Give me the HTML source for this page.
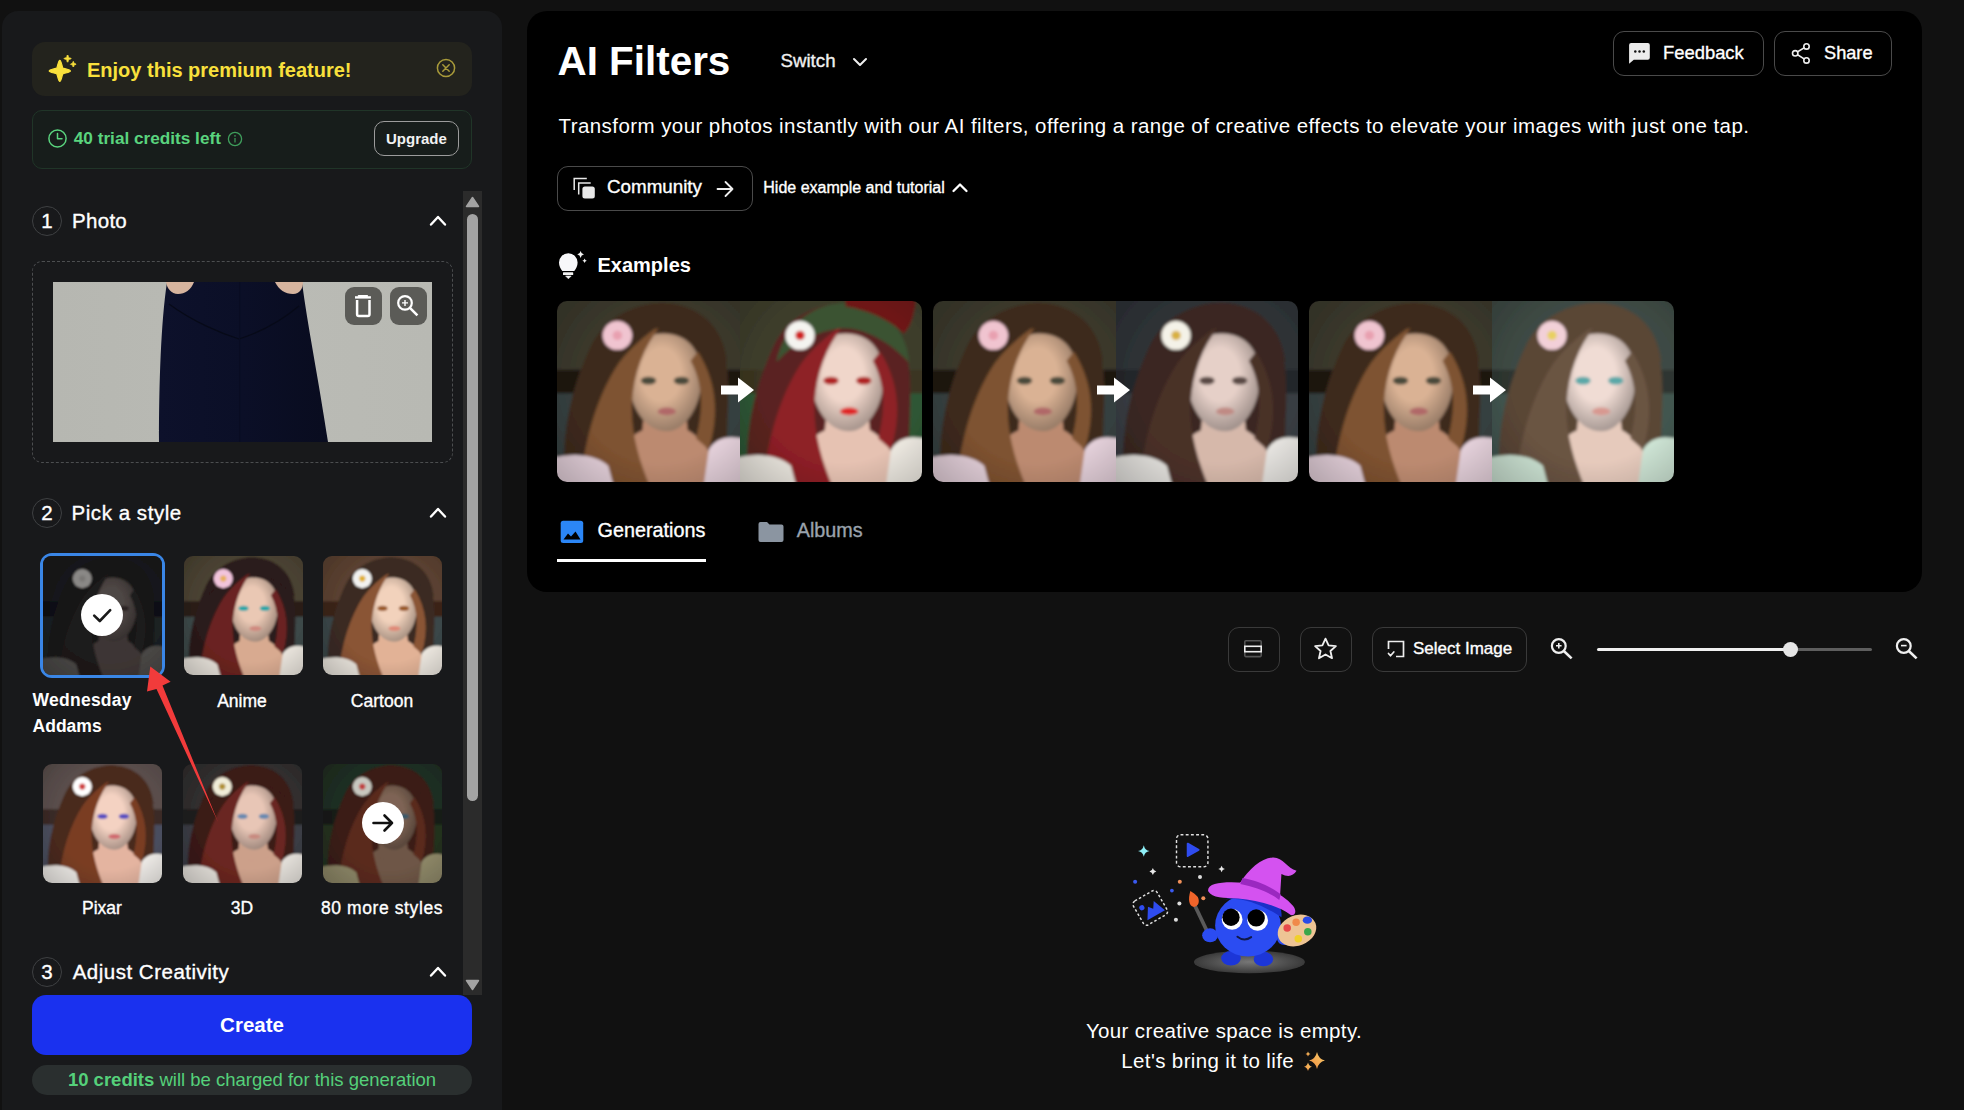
<!DOCTYPE html>
<html><head><meta charset="utf-8">
<style>
*{box-sizing:border-box;margin:0;padding:0}
html,body{width:1964px;height:1110px;overflow:hidden;background:#111111;font-family:"Liberation Sans",sans-serif;color:#fff}
.a{position:absolute}
.t{position:absolute;white-space:nowrap;line-height:1}
svg{display:block}
#left{left:2px;top:11px;width:500px;height:1110px;background:#18191b;border-radius:16px 16px 0 0}
.m{-webkit-text-stroke:0.35px currentColor}
#card{left:527px;top:11px;width:1395px;height:581px;background:#000;border-radius:20px}
.btn{position:absolute;border:1.5px solid #4a4a4a;border-radius:11px}
.circ{position:absolute;width:30px;height:30px;border:1.5px solid #3e4042;border-radius:50%}
.thumb{position:absolute;width:119px;height:119px;border-radius:9px;overflow:hidden}
.thumb svg{width:100%;height:100%}
.pb,.px,.pd,.pp,.pw,.pa,.pc,.px2,.p3,.pm{--top:var(--hair);--hat:transparent}
.pb{--bg1:#3a382c;--band:#1e1610;--bg2:#364040;--hair:#3e2a1c;--hair2:#7e5230;--skin:#dab294;--skin2:#bc8a70;--shirt:#e6d2dc;--fl:#f0c4d0;--flc:#e8a0b0;--eye:#4a4a3a;--lip:#b06868}
.px{--bg1:#3e3e2c;--band:#3a3420;--bg2:#2e5634;--hair:#5a2420;--hair2:#8e2026;--skin:#f0d6ca;--skin2:#e6c2b2;--shirt:#eeeae2;--fl:#f4f4f0;--flc:#d02020;--eye:#b02020;--lip:#e02828;--top:#3a5232;--hat:#6e1616}
.pd{--bg1:#2e3236;--band:#22262a;--bg2:#383c42;--hair:#3a2822;--hair2:#4a3028;--skin:#e6d0c8;--skin2:#d6b8aa;--shirt:#e8e6e2;--fl:#f4f2e8;--flc:#d8b040;--eye:#5a4a44;--lip:#c08a84}
.pp{--bg1:#3e4a44;--band:#2e3630;--bg2:#425650;--hair:#5a4636;--hair2:#6a5442;--skin:#f0dcd4;--skin2:#e6cabc;--shirt:#cfe6d6;--fl:#f2d0d8;--flc:#e8d060;--eye:#5aa8a8;--lip:#d89890}
.pw{--bg1:#16181a;--band:#101112;--bg2:#1a2022;--hair:#171414;--hair2:#1e1a1a;--skin:#4e4644;--skin2:#3e3634;--shirt:#4a4846;--fl:#8a8886;--flc:#7a7876;--eye:#2a2422;--lip:#4a3a3a}
.pa{--bg1:#4a4232;--band:#2a1e18;--bg2:#3c4848;--hair:#2a1a1a;--hair2:#6a2220;--skin:#eac8b4;--skin2:#d8aa90;--shirt:#ebe6de;--fl:#f2c4dc;--flc:#e8b060;--eye:#2aa6a8;--lip:#d08a80}
.pc{--bg1:#5a4030;--band:#3a2418;--bg2:#3a4648;--hair:#3a2a24;--hair2:#8a5434;--skin:#f2d2bc;--skin2:#e2b296;--shirt:#ede8e0;--fl:#f2f2f0;--flc:#e0b030;--eye:#9a5a2a;--lip:#e08a78}
.px2{--bg1:#5a4e4c;--band:#3a2a26;--bg2:#4a4e5e;--hair:#4a2a1e;--hair2:#7a3e24;--skin:#f4d2c2;--skin2:#e4b4a0;--shirt:#efece8;--fl:#ffffff;--flc:#d04040;--eye:#5a50c0;--lip:#d06a70}
.p3{--bg1:#302e2e;--band:#1e1c1c;--bg2:#3a3c44;--hair:#3a1a18;--hair2:#6a2620;--skin:#e8c6b6;--skin2:#cca08a;--shirt:#e6e2dc;--fl:#f0ecd8;--flc:#b09030;--eye:#6a8ab0;--lip:#c88a80}
.pm{--bg1:#1e2e22;--band:#141a14;--bg2:#24301e;--hair:#3a1c16;--hair2:#5a2a1e;--skin:#7e6454;--skin2:#6e5646;--shirt:#8e8868;--fl:#c8c8c0;--flc:#c04040;--eye:#3a5a6a;--lip:#8a5a50}

</style></head>
<body>
<svg width="0" height="0" style="position:absolute">
<defs>
<filter id="bl" x="-20%" y="-20%" width="140%" height="140%"><feGaussianBlur stdDeviation="0.9"/></filter>
<radialGradient id="fsh" cx="0.45" cy="0.42" r="0.6"><stop offset="0.45" stop-color="#000" stop-opacity="0"/><stop offset="1" stop-color="#000" stop-opacity="0.32"/></radialGradient>
<radialGradient id="vig" cx="0.55" cy="0.45" r="0.75"><stop offset="0.5" stop-color="#000" stop-opacity="0"/><stop offset="1" stop-color="#000" stop-opacity="0.3"/></radialGradient>
<symbol id="por" viewBox="0 0 100 100" preserveAspectRatio="none">
<g filter="url(#bl)">
<rect x="-10" y="-10" width="120" height="120" fill="var(--bg1)"/>
<rect x="-10" y="38" width="120" height="14" fill="var(--band)"/>
<rect x="-10" y="51" width="120" height="60" fill="var(--bg2)"/>
<path d="M6,110 C0,78 8,48 18,26 C26,8 44,1 58,1 C77,2 91,16 93,38 C95,58 91,78 94,110Z" fill="var(--hair)"/>
<path d="M20,110 C26,84 40,70 60,68 C78,70 88,84 90,110Z" fill="var(--skin2)"/>
<path d="M48,58 L70,58 L72,78 C64,82 54,82 46,78Z" fill="var(--skin2)"/>
<path d="M39,41 C39,25 48,18 58,18 C70,18 79,26 79,42 C79,58 70,72 60,72 C48,72 39,58 39,41Z" fill="var(--skin)"/>
<path d="M39,41 C39,25 48,18 58,18 C70,18 79,26 79,42 C79,58 70,72 60,72 C48,72 39,58 39,41Z" fill="url(#fsh)"/>
<path d="M12,110 C14,78 22,52 34,34 C40,26 48,19 57,13 C47,26 42,40 41,56 C40,74 46,92 54,110Z" fill="var(--hair2)"/>
<path d="M77,28 C87,44 89,62 83,82 L76,76 C80,60 80,46 73,33Z" fill="var(--hair2)"/>
<path d="M20,34 C24,12 42,1 58,1 C78,2 91,14 93,34 C82,22 68,15 57,15 C42,16 28,24 20,34Z" fill="var(--top)"/>
<path d="M58,-10 H97 C97,6 94,14 90,18 C82,10 70,5 58,3Z" fill="var(--hat)"/>
<path d="M-10,110 V89 C6,83 20,84 28,91 L33,110Z" fill="var(--shirt)"/>
<path d="M110,110 V80 C98,73 88,74 83,82 L79,110Z" fill="var(--shirt)"/>
<circle cx="33" cy="19" r="8" fill="var(--fl)"/>
<circle cx="33" cy="19" r="2.6" fill="var(--flc)"/>
<ellipse cx="50" cy="44" rx="4.2" ry="2.2" fill="var(--eye)"/>
<ellipse cx="68" cy="44" rx="4.2" ry="2.2" fill="var(--eye)"/>
<ellipse cx="60" cy="61" rx="5" ry="2.1" fill="var(--lip)"/>
<rect x="-10" y="-10" width="120" height="120" fill="url(#vig)"/>
</g>
</symbol>
</defs>
</svg>

<!-- LEFT PANEL -->
<div id="left" class="a"></div>
<div class="a" style="left:32px;top:42px;width:440px;height:54px;background:#23231d;border-radius:13px"></div>
<svg class="a" style="left:44px;top:52px" width="36" height="34" viewBox="0 0 36 34">
 <path fill="#f9e03c" d="M15.80,8.30 C17.28,8.30 17.92,14.45 18.77,15.93 C20.25,16.78 26.40,17.42 26.40,18.90 C26.40,20.38 20.25,21.02 18.77,21.87 C17.92,23.35 17.28,29.50 15.80,29.50 C14.32,29.50 13.68,23.35 12.83,21.87 C11.35,21.02 5.20,20.38 5.20,18.90 C5.20,17.42 11.35,16.78 12.83,15.93 C13.68,14.45 14.32,8.30 15.80,8.30 Z" stroke="#f9e03c" stroke-width="1.2" stroke-linejoin="round"/>
 <path fill="#f9e03c" d="M23.60,3.00 C24.10,3.00 24.32,5.09 24.50,5.70 C25.11,5.88 27.20,6.10 27.20,6.60 C27.20,7.10 25.11,7.32 24.50,7.50 C24.32,8.11 24.10,10.20 23.60,10.20 C23.10,10.20 22.88,8.11 22.70,7.50 C22.09,7.32 20.00,7.10 20.00,6.60 C20.00,6.10 22.09,5.88 22.70,5.70 C22.88,5.09 23.10,3.00 23.60,3.00 Z" stroke="#f9e03c" stroke-width="0.9" stroke-linejoin="round"/>
 <path fill="#f9e03c" d="M29.30,9.40 C29.69,9.40 29.86,11.02 30.00,11.50 C30.48,11.64 32.10,11.81 32.10,12.20 C32.10,12.59 30.48,12.76 30.00,12.90 C29.86,13.38 29.69,15.00 29.30,15.00 C28.91,15.00 28.74,13.38 28.60,12.90 C28.12,12.76 26.50,12.59 26.50,12.20 C26.50,11.81 28.12,11.64 28.60,11.50 C28.74,11.02 28.91,9.40 29.30,9.40 Z" stroke="#f9e03c" stroke-width="0.9" stroke-linejoin="round"/>
</svg>
<div class="t" style="left:87px;top:59.7px;font-size:20px;font-weight:bold;color:#f9e03c">Enjoy this premium feature!</div>
<svg class="a" style="left:436px;top:58px" width="20" height="20" viewBox="0 0 20 20">
 <circle cx="10" cy="10" r="8.6" fill="none" stroke="#a89a3a" stroke-width="1.5"/>
 <path d="M6.8,6.8 L13.2,13.2 M13.2,6.8 L6.8,13.2" stroke="#a89a3a" stroke-width="1.5" stroke-linecap="round"/>
</svg>

<div class="a" style="left:32px;top:109.5px;width:440px;height:59px;background:#171d1b;border:1px solid #203528;border-radius:10px"></div>
<svg class="a" style="left:47px;top:128px" width="21" height="21" viewBox="0 0 21 21">
 <circle cx="10.5" cy="10.5" r="8.6" fill="none" stroke="#5ad47e" stroke-width="1.5"/>
 <path d="M10.5,5.5 V10.8 H15" fill="none" stroke="#5ad47e" stroke-width="1.5" stroke-linecap="round" stroke-linejoin="round"/>
</svg>
<div class="t" style="left:73.8px;top:129.6px;font-size:17.2px;font-weight:bold;color:#5ad47e">40 trial credits left</div>
<svg class="a" style="left:227px;top:130.5px" width="16" height="16" viewBox="0 0 16 16">
 <circle cx="8" cy="8" r="6.6" fill="none" stroke="#3f9e5c" stroke-width="1.3"/>
 <path d="M8,7 V11.5" stroke="#3f9e5c" stroke-width="1.2"/><circle cx="8" cy="4.9" r="0.8" fill="#3f9e5c"/>
</svg>
<div class="a" style="left:374px;top:121px;width:85px;height:35px;border:1.5px solid #9c9c9c;border-radius:10px"></div>
<div class="t" style="left:386px;top:130.5px;font-size:15px;font-weight:bold;color:#f2f2f2">Upgrade</div>

<!-- scrollbar -->
<div class="a" style="left:463px;top:191px;width:19px;height:804px;background:#2b2b2b"></div>
<svg class="a" style="left:463px;top:191px" width="19" height="804" viewBox="0 0 19 804">
 <path d="M9.5,6.5 L15.5,15.5 H3.5Z" fill="#a3a3a3" stroke="#a3a3a3" stroke-width="1.5" stroke-linejoin="round"/>
 <rect x="4" y="23" width="11" height="587" rx="5.5" fill="#a3a3a3"/>
 <path d="M9.5,798.5 L15.5,789.5 H3.5Z" fill="#a3a3a3" stroke="#a3a3a3" stroke-width="1.5" stroke-linejoin="round"/>
</svg>

<!-- section 1 -->
<div class="circ" style="left:32px;top:206px"></div>
<div class="t m" style="left:32px;width:30px;text-align:center;top:210.6px;font-size:20.5px;color:#fff">1</div>
<div class="t m" style="left:72px;top:210.6px;font-size:20.5px;letter-spacing:0.3px;color:#fff">Photo</div>
<svg class="a" style="left:428px;top:212px" width="20" height="16" viewBox="0 0 20 16"><path d="M3,12.5 L10,5 L17,12.5" fill="none" stroke="#fff" stroke-width="2.4" stroke-linecap="round" stroke-linejoin="round"/></svg>

<div class="a" style="left:32px;top:261px;width:421px;height:202px;border:1px dashed #4c4e50;border-radius:10px"></div>
<div class="a" style="left:53px;top:282px;width:379px;height:160px;overflow:hidden;background:linear-gradient(90deg,#b6b7b1 0%,#babbb5 60%,#b8b9b3 100%)">
 <svg width="379" height="160" viewBox="0 0 379 160" class="a" style="left:0;top:0">
  <defs><linearGradient id="sk" x1="0" x2="1"><stop offset="0" stop-color="#0d112b"/><stop offset="0.5" stop-color="#0b0f27"/><stop offset="1" stop-color="#090c1f"/></linearGradient></defs>
  <path d="M114,0 L249,0 C254,40 266,100 275,160 L106,160 C106,100 108,40 114,0Z" fill="url(#sk)"/>
  <path d="M116,22 C140,40 170,52 186,57 C205,51 228,39 246,24" fill="none" stroke="#070a18" stroke-width="1.3"/>
  <path d="M186.6,0 V160" stroke="#090c22" stroke-width="1.2"/>
  <path d="M113,0 H141 C138,8 132,12 125,12 C118,12 114,6 113,0Z" fill="#d6b49e"/>
  <path d="M222,0 H250 C250,6 247,12 240,12 C232,12 226,8 222,0Z" fill="#d6b49e"/>
 </svg>
</div>
<div class="a" style="left:345px;top:287px;width:37px;height:38px;background:#5b5b57;border-radius:9px"></div>
<svg class="a" style="left:345px;top:287px" width="37" height="38" viewBox="0 0 37 38">
 <g transform="translate(-1.3 -1.4)"><path d="M11.3,11.8 H27.2" stroke="#fff" stroke-width="2.4" stroke-linecap="butt"/><path d="M15,10.4 H23.4" stroke="#fff" stroke-width="2" stroke-linecap="round"/>
 <path d="M13.4,14.3 V28.6 Q13.4,30.4 15.2,30.4 H24 Q25.8,30.4 25.8,28.6 V14.3" fill="none" stroke="#fff" stroke-width="2.5"/></g>
</svg>
<div class="a" style="left:390px;top:287px;width:37px;height:38px;background:#5b5b57;border-radius:9px"></div>
<svg class="a" style="left:390px;top:287px" width="37" height="38" viewBox="0 0 37 38">
 <circle cx="15" cy="15.9" r="6.8" fill="none" stroke="#fff" stroke-width="2.2"/>
 <path d="M19.9,20.8 L27.4,28.4" stroke="#fff" stroke-width="2.6"/>
 <path d="M15,12.9 V18.9 M12,15.9 H18" stroke="#fff" stroke-width="1.4"/>
</svg>

<!-- section 2 -->
<div class="circ" style="left:32px;top:498px"></div>
<div class="t m" style="left:32px;width:30px;text-align:center;top:502.6px;font-size:20.5px;color:#fff">2</div>
<div class="t m" style="left:71.5px;top:502.6px;font-size:20.5px;letter-spacing:0.55px;color:#fff">Pick a style</div>
<svg class="a" style="left:428px;top:504px" width="20" height="16" viewBox="0 0 20 16"><path d="M3,12.5 L10,5 L17,12.5" fill="none" stroke="#fff" stroke-width="2.4" stroke-linecap="round" stroke-linejoin="round"/></svg>

<!-- thumbs row 1 -->
<div class="a" style="left:40px;top:553px;width:125px;height:125px;border:3px solid #3a86e6;border-radius:12px"></div>
<div class="thumb pw" style="left:43px;top:556px;width:119px;height:119px;border-radius:8px"><svg viewBox="0 0 100 100" preserveAspectRatio="none"><use href="#por"/></svg></div>
<div class="a" style="left:81px;top:594px;width:42px;height:42px;border-radius:50%;background:#fff"></div>
<svg class="a" style="left:81px;top:594px" width="42" height="42" viewBox="0 0 42 42"><path d="M13.2,21.6 L18.8,27 L29.2,16.2" fill="none" stroke="#1a1a1a" stroke-width="2.6" stroke-linecap="round" stroke-linejoin="round"/></svg>

<div class="thumb pa" style="left:183.5px;top:556px"><svg viewBox="0 0 100 100" preserveAspectRatio="none"><use href="#por"/></svg></div>
<div class="thumb pc" style="left:323px;top:556px"><svg viewBox="0 0 100 100" preserveAspectRatio="none"><use href="#por"/></svg></div>

<div class="t" style="left:32.6px;top:691.8px;font-size:17.5px;font-weight:bold;letter-spacing:0.25px;color:#fff">Wednesday</div>
<div class="t" style="left:32.6px;top:717.6px;font-size:17.5px;font-weight:bold;color:#fff">Addams</div>
<div class="t m" style="left:182px;width:120px;text-align:center;top:692.5px;font-size:17.5px;color:#fff">Anime</div>
<div class="t m" style="left:322px;width:120px;text-align:center;top:692.5px;font-size:17.5px;color:#fff">Cartoon</div>

<!-- thumbs row 2 -->
<div class="thumb px2" style="left:43px;top:764px"><svg viewBox="0 0 100 100" preserveAspectRatio="none"><use href="#por"/></svg></div>
<div class="thumb p3" style="left:183px;top:764px"><svg viewBox="0 0 100 100" preserveAspectRatio="none"><use href="#por"/></svg></div>
<div class="thumb pm" style="left:323px;top:764px"><svg viewBox="0 0 100 100" preserveAspectRatio="none"><use href="#por"/></svg></div>
<div class="a" style="left:362px;top:802px;width:42px;height:42px;border-radius:50%;background:#fff"></div>
<svg class="a" style="left:362px;top:802px" width="42" height="42" viewBox="0 0 42 42"><path d="M11.5,21 H30 M22.5,13.5 L30,21 L22.5,28.5" fill="none" stroke="#111" stroke-width="2.6" stroke-linecap="round" stroke-linejoin="round"/></svg>

<div class="t m" style="left:42px;width:120px;text-align:center;top:900.2px;font-size:17.5px;color:#fff">Pixar</div>
<div class="t m" style="left:182px;width:120px;text-align:center;top:900.2px;font-size:17.5px;color:#fff">3D</div>
<div class="t m" style="left:320px;width:124px;text-align:center;top:900.2px;font-size:17.5px;letter-spacing:0.6px;color:#fff">80 more styles</div>

<!-- section 3 -->
<div class="circ" style="left:32px;top:957px"></div>
<div class="t m" style="left:32px;width:30px;text-align:center;top:961.8px;font-size:20.5px;color:#fff">3</div>
<div class="t m" style="left:72.7px;top:961.8px;font-size:20.5px;letter-spacing:0.5px;color:#fff">Adjust Creativity</div>
<svg class="a" style="left:428px;top:963px" width="20" height="16" viewBox="0 0 20 16"><path d="M3,12.5 L10,5 L17,12.5" fill="none" stroke="#fff" stroke-width="2.4" stroke-linecap="round" stroke-linejoin="round"/></svg>

<div class="a" style="left:32px;top:995px;width:440px;height:60px;background:#1a31ef;border-radius:14px"></div>
<div class="t" style="left:32px;width:440px;text-align:center;top:1014.6px;font-size:20.5px;font-weight:bold;color:#fff">Create</div>
<div class="a" style="left:32px;top:1065px;width:440px;height:30px;background:#2a2f2f;border-radius:15px"></div>
<div class="t" style="left:32px;width:440px;text-align:center;top:1070.7px;font-size:18.5px;color:#55d07a"><b>10 credits</b> will be charged for this generation</div>

<!-- red annotation arrow -->
<svg class="a" style="left:0;top:0" width="260" height="860" viewBox="0 0 260 860">
 <path d="M150.3,666.4 L170.6,681.8 L162.5,685.5 L218,822 L156.5,689 L147,691.5 Z" fill="#f23b3b"/>
</svg>

<!-- MAIN CARD -->
<div id="card" class="a"></div>
<div class="t" style="left:557.5px;top:40.6px;font-size:40.4px;font-weight:bold;color:#fff">AI Filters</div>
<div class="t m" style="left:780.5px;top:51.8px;font-size:18.7px;color:#f0f0f0">Switch</div>
<svg class="a" style="left:850px;top:54px" width="20" height="16" viewBox="0 0 20 16"><path d="M4,5 L10,11 L16,5" fill="none" stroke="#eee" stroke-width="2" stroke-linecap="round" stroke-linejoin="round"/></svg>

<div class="btn" style="left:1613px;top:31px;width:151px;height:45px"></div>
<svg class="a" style="left:1626px;top:40px" width="28" height="26" viewBox="0 0 28 26">
 <path d="M5.1,3 H21.8 Q23.8,3 23.8,5 V17.8 Q23.8,19.8 21.8,19.8 H7.8 L3.1,23.8 V5 Q3.1,3 5.1,3Z" fill="#ececec"/>
 <circle cx="9.3" cy="11.4" r="1.25" fill="#111"/><circle cx="13.5" cy="11.4" r="1.25" fill="#111"/><circle cx="17.8" cy="11.4" r="1.25" fill="#111"/>
</svg>
<div class="t m" style="left:1663px;top:44.2px;font-size:18.4px;color:#fff">Feedback</div>
<div class="btn" style="left:1774px;top:31px;width:118px;height:45px"></div>
<svg class="a" style="left:1788px;top:40px" width="26" height="26" viewBox="0 0 26 26">
 <path d="M7.2,13.3 L18.5,6.4 M7.2,13.3 L18.5,20.4" stroke="#eee" stroke-width="1.6"/>
 <circle cx="18.5" cy="6.4" r="2.7" fill="#000" stroke="#eee" stroke-width="1.6"/>
 <circle cx="7.2" cy="13.3" r="2.7" fill="#000" stroke="#eee" stroke-width="1.6"/>
 <circle cx="18.5" cy="20.4" r="2.7" fill="#000" stroke="#eee" stroke-width="1.6"/>
</svg>
<div class="t m" style="left:1824px;top:43.5px;font-size:18.2px;color:#fff">Share</div>

<div class="t" style="left:558.5px;top:115.9px;font-size:20.5px;letter-spacing:0.43px;color:#fff">Transform your photos instantly with our AI filters, offering a range of creative effects to elevate your images with just one tap.</div>

<div class="btn" style="left:557px;top:166px;width:196px;height:45px"></div>
<svg class="a" style="left:571px;top:176px" width="26" height="24" viewBox="0 0 26 24">
 <path d="M3.2,14 V2.4 H15.8" fill="none" stroke="#e8e8e8" stroke-width="1.5"/>
 <path d="M7.7,18.6 V6.9 H19.7" fill="none" stroke="#e8e8e8" stroke-width="1.5"/>
 <rect x="11.4" y="10.5" width="12.4" height="12.1" rx="2.5" fill="#e8e8e8"/>
</svg>
<div class="t m" style="left:607px;top:178.3px;font-size:18.8px;color:#fff">Community</div>
<svg class="a" style="left:714px;top:178px" width="22" height="22" viewBox="0 0 22 22"><path d="M3.5,11 H18.5 M11.5,4 L18.5,11 L11.5,18" fill="none" stroke="#eee" stroke-width="1.8" stroke-linecap="round" stroke-linejoin="round"/></svg>
<div class="t m" style="left:763.3px;top:180px;font-size:16px;color:#fff">Hide example and tutorial</div>
<svg class="a" style="left:950px;top:180px" width="20" height="15" viewBox="0 0 20 15"><path d="M3.5,11 L10,4.5 L16.5,11" fill="none" stroke="#fff" stroke-width="2.3" stroke-linecap="round" stroke-linejoin="round"/></svg>

<svg class="a" style="left:555px;top:250px" width="34" height="30" viewBox="0 0 34 30">
 <path d="M4,12.5 A9.3,9.3 0 1 1 22.6,12.5 C22.6,16.2 21,18.8 19.3,20.9 H7.3 C5.6,18.8 4,16.2 4,12.5Z" fill="#f8f8fa"/>
 <rect x="8" y="22.2" width="10.2" height="2.7" rx="0.5" fill="#f2f2f2"/>
 <path d="M10.6,26 H16.2 L13.4,28.8Z" fill="#f2f2f2" stroke="#f2f2f2" stroke-width="0.6" stroke-linejoin="round"/>
 <path d="M25.6,1.1 Q26.1,4 29,4.5 Q26.1,5 25.6,7.9 Q25.1,5 22.2,4.5 Q25.1,4 25.6,1.1Z" fill="#f2f2f2"/>
 <path d="M29.6,8.6 Q30,10.4 31.8,10.8 Q30,11.2 29.6,13 Q29.2,11.2 27.4,10.8 Q29.2,10.4 29.6,8.6Z" fill="#f2f2f2"/>
</svg>
<div class="t" style="left:597.5px;top:255.3px;font-size:20px;font-weight:bold;color:#fff">Examples</div>

<!-- examples -->
<div class="a" style="left:557px;top:301px;width:365px;height:181px;border-radius:10px;overflow:hidden">
 <div class="a pb" style="left:0;top:0;width:183px;height:181px"><svg width="183" height="181" viewBox="0 0 100 100" preserveAspectRatio="none"><use href="#por"/></svg></div>
 <div class="a px" style="left:183px;top:0;width:182px;height:181px"><svg width="182" height="181" viewBox="0 0 100 100" preserveAspectRatio="none"><use href="#por"/></svg></div>
</div>
<div class="a" style="left:933px;top:301px;width:365px;height:181px;border-radius:10px;overflow:hidden">
 <div class="a pb" style="left:0;top:0;width:183px;height:181px"><svg width="183" height="181" viewBox="0 0 100 100" preserveAspectRatio="none"><use href="#por"/></svg></div>
 <div class="a pd" style="left:183px;top:0;width:182px;height:181px"><svg width="182" height="181" viewBox="0 0 100 100" preserveAspectRatio="none"><use href="#por"/></svg></div>
</div>
<div class="a" style="left:1309px;top:301px;width:365px;height:181px;border-radius:10px;overflow:hidden">
 <div class="a pb" style="left:0;top:0;width:183px;height:181px"><svg width="183" height="181" viewBox="0 0 100 100" preserveAspectRatio="none"><use href="#por"/></svg></div>
 <div class="a pp" style="left:183px;top:0;width:182px;height:181px"><svg width="182" height="181" viewBox="0 0 100 100" preserveAspectRatio="none"><use href="#por"/></svg></div>
</div>
<svg class="a" style="left:718px;top:374px" width="40" height="32" viewBox="0 0 40 32"><path d="M3,11.5 H20 V3.5 L36,16 L20,28.5 V20.5 H3Z" fill="#fff"/></svg>
<svg class="a" style="left:1094px;top:374px" width="40" height="32" viewBox="0 0 40 32"><path d="M3,11.5 H20 V3.5 L36,16 L20,28.5 V20.5 H3Z" fill="#fff"/></svg>
<svg class="a" style="left:1470px;top:374px" width="40" height="32" viewBox="0 0 40 32"><path d="M3,11.5 H20 V3.5 L36,16 L20,28.5 V20.5 H3Z" fill="#fff"/></svg>

<!-- tabs -->
<svg class="a" style="left:560px;top:520px" width="24" height="24" viewBox="0 0 24 24">
 <rect x="0.7" y="0.8" width="22.5" height="22.2" rx="2.5" fill="#2b86f6"/>
 <path d="M3.5,19.5 L8,13.5 L11,16.5 L15.5,11.5 L20.5,19.5Z" fill="#000"/>
</svg>
<div class="t m" style="left:597.6px;top:520.8px;font-size:19.8px;color:#fff">Generations</div>
<div class="a" style="left:557px;top:559px;width:149px;height:3px;background:#fff"></div>
<svg class="a" style="left:757px;top:521px" width="28" height="22" viewBox="0 0 28 22">
 <path d="M1.5,3 Q1.5,1 3.5,1 H10 L12.5,3.5 H24.5 Q26.5,3.5 26.5,5.5 V19 Q26.5,21 24.5,21 H3.5 Q1.5,21 1.5,19Z" fill="#8b95a1"/>
</svg>
<div class="t m" style="left:796.7px;top:520.8px;font-size:19.8px;color:#9aa3ad">Albums</div>

<!-- toolbar -->
<div class="btn" style="left:1228px;top:627px;width:52px;height:45px;border-color:#3a3a3a"></div>
<svg class="a" style="left:1241px;top:637px" width="24" height="24" viewBox="0 0 24 24">
 <rect x="3.8" y="3.8" width="16.4" height="15.8" rx="1" fill="none" stroke="#555" stroke-width="1.6"/>
 <rect x="3.8" y="9.3" width="16.4" height="5.4" fill="#111" stroke="#eee" stroke-width="1.6"/>
</svg>
<div class="btn" style="left:1300px;top:627px;width:52px;height:45px;border-color:#3a3a3a"></div>
<svg class="a" style="left:1313px;top:637px" width="26" height="26" viewBox="0 0 26 26">
 <path transform="translate(12.5 12) scale(1.07) translate(-12.5 -12)" d="M12.5,2.3 L15.4,8.6 L22.2,9.3 L17.1,13.9 L18.6,20.6 L12.5,17.1 L6.4,20.6 L7.9,13.9 L2.8,9.3 L9.6,8.6Z" fill="none" stroke="#f0f0f0" stroke-width="1.7" stroke-linejoin="round"/>
</svg>
<div class="btn" style="left:1372px;top:627px;width:155px;height:45px;border-color:#3a3a3a"></div>
<svg class="a" style="left:1385px;top:638px" width="22" height="22" viewBox="0 0 22 22">
 <path d="M3.5,11 V3.5 H18.5 V18.5 H11" fill="none" stroke="#eee" stroke-width="1.7"/>
 <path d="M3.5,15.5 L5.5,17.8 L8.8,14" fill="none" stroke="#eee" stroke-width="1.7" stroke-linecap="round" stroke-linejoin="round"/>
</svg>
<div class="t m" style="left:1413px;top:639.7px;font-size:17px;color:#fff">Select Image</div>
<svg class="a" style="left:1548px;top:635px" width="28" height="28" viewBox="0 0 28 28">
 <circle cx="10.8" cy="11" r="6.9" fill="none" stroke="#f0f0f0" stroke-width="2.2"/>
 <path d="M15.8,16 L23.6,23.4" stroke="#f0f0f0" stroke-width="2.6"/>
 <path d="M10.8,8 V13.6 M8,10.8 H13.6" stroke="#f0f0f0" stroke-width="1.6"/>
</svg>
<div class="a" style="left:1597px;top:648px;width:193px;height:3px;background:#f0f0f0;border-radius:2px"></div>
<div class="a" style="left:1790px;top:648px;width:82px;height:3px;background:#5e5e5e;border-radius:2px"></div>
<div class="a" style="left:1782.5px;top:642px;width:15px;height:15px;background:#e6e6e6;border-radius:50%"></div>
<svg class="a" style="left:1893px;top:635px" width="28" height="28" viewBox="0 0 28 28">
 <circle cx="10.8" cy="11" r="6.9" fill="none" stroke="#f0f0f0" stroke-width="2.2"/>
 <path d="M15.8,16 L23.6,23.4" stroke="#f0f0f0" stroke-width="2.6"/>
 <path d="M8,10.6 H13.6" stroke="#f0f0f0" stroke-width="1.6"/>
</svg>

<!-- empty state -->
<svg class="a" style="left:1120px;top:825px" width="210" height="160" viewBox="0 0 1457 1110">
 <defs><radialGradient id="sh" cx="0.5" cy="0.5" r="0.5"><stop offset="0" stop-color="#777"/><stop offset="1" stop-color="#3a3a3a"/></radialGradient></defs>
 <ellipse cx="898" cy="950" rx="385" ry="78" fill="url(#sh)"/>
 <rect x="392" y="68" width="218" height="222" rx="28" fill="none" stroke="#e0e0e0" stroke-width="10" stroke-dasharray="20 16"/>
 <path d="M470,130 L545,172 L470,215Z" fill="#2f4cf0" stroke="#2f4cf0" stroke-width="14" stroke-linejoin="round"/>
 <g transform="rotate(-30 210 575)">
  <rect x="115" y="480" width="190" height="190" rx="26" fill="none" stroke="#e0e0e0" stroke-width="10" stroke-dasharray="18 15"/>
  <path d="M150,640 L200,560 L225,590 L255,545 L290,640Z" fill="#2f4cf0"/>
  <circle cx="160" cy="545" r="18" fill="#2f4cf0"/>
 </g>
 <path d="M165,140 Q172,175 205,180 Q172,185 165,220 Q158,185 125,180 Q158,175 165,140Z" fill="#8ff0f8"/>
 <path d="M228,298 Q232,318 252,322 Q232,326 228,346 Q224,326 204,322 Q224,318 228,298Z" fill="#e8e8e8"/>
 <path d="M705,282 Q709,301 728,305 Q709,309 705,328 Q701,309 682,305 Q701,301 705,282Z" fill="#e8e8e8"/>
 <circle cx="555" cy="360" r="14" fill="#ddd"/><circle cx="412" cy="545" r="14" fill="#ddd"/><circle cx="388" cy="658" r="14" fill="#ddd"/>
 <circle cx="415" cy="393" r="14" fill="#f0905a"/><circle cx="578" cy="508" r="14" fill="#f0905a"/>
 <circle cx="105" cy="393" r="14" fill="#3a5af0"/><circle cx="360" cy="455" r="13" fill="#3a5af0"/>
 <!-- feet -->
 <ellipse cx="770" cy="925" rx="68" ry="50" fill="#1c36d8"/>
 <ellipse cx="995" cy="930" rx="68" ry="50" fill="#1c36d8"/>
 <!-- brush -->
 <path d="M520,560 L615,760" stroke="#5a5a5a" stroke-width="26" stroke-linecap="round"/>
 <path d="M488,458 C470,520 480,560 510,568 C545,570 555,530 540,500 C525,480 505,470 488,458Z" fill="#f0642a"/>
 <!-- arms -->
 <ellipse cx="625" cy="765" rx="55" ry="48" fill="#2b4cf2"/>
 <ellipse cx="1140" cy="790" rx="50" ry="42" fill="#2b4cf2"/>
 <!-- body -->
 <ellipse cx="888" cy="698" rx="228" ry="215" fill="#2b4cf2"/>
 <!-- palette -->
 <g transform="rotate(-22 1228 732)">
  <ellipse cx="1228" cy="732" rx="138" ry="105" fill="#eec494"/>
 </g>
 <circle cx="1160" cy="715" r="26" fill="#e84a4a"/><circle cx="1222" cy="675" r="26" fill="#f08a4a"/>
 <ellipse cx="1300" cy="660" rx="32" ry="25" fill="#2a4ae8"/><circle cx="1303" cy="740" r="26" fill="#3aa64a"/><circle cx="1237" cy="790" r="26" fill="#f0d02a"/>
 <!-- eyes -->
 <circle cx="778" cy="655" r="72" fill="#fff"/><circle cx="955" cy="662" r="72" fill="#fff"/>
 <circle cx="770" cy="640" r="60" fill="#000"/><circle cx="945" cy="645" r="60" fill="#000"/>
 <path d="M815,775 Q862,812 910,778" fill="none" stroke="#101848" stroke-width="14" stroke-linecap="round"/>
 <!-- hat -->
 <path d="M690,525 Q860,470 1120,640 Q1130,560 1060,520 Q900,470 690,525Z" fill="#1a30c8"/>
 <path d="M830,405 C900,300 980,230 1060,225 C1130,222 1160,300 1225,318 C1200,360 1160,360 1120,340 L1110,500Z" fill="#d452f0"/>
 <path d="M612,460 C600,400 720,390 860,400 C990,410 1120,470 1200,560 C1230,600 1215,630 1185,625 C1100,560 950,520 820,510 C720,505 640,510 612,460Z" fill="#d452f0"/>
 <path d="M850,368 C950,385 1050,430 1115,480 L1105,520 C1040,470 940,430 835,410Z" fill="#9a28c0"/>
</svg>
<div class="t" style="left:1024px;width:400px;text-align:center;top:1020.7px;font-size:20.5px;letter-spacing:0.37px;color:#fff">Your creative space is empty.</div>
<div class="t" style="left:1121.3px;top:1051px;font-size:20.5px;letter-spacing:0.37px;color:#fff">Let's bring it to life</div>
<svg class="a" style="left:1302px;top:1049px" width="26" height="24" viewBox="0 0 26 24">
 <defs><linearGradient id="sp" x1="0" y1="1" x2="1" y2="0"><stop offset="0" stop-color="#f08a3a"/><stop offset="1" stop-color="#f8d070"/></linearGradient></defs>
 <path d="M15,3 Q16.5,10 23,11.5 Q16.5,13 15,20 Q13.5,13 7,11.5 Q13.5,10 15,3Z" fill="url(#sp)"/>
 <path d="M6,13.5 Q6.8,17 10,17.8 Q6.8,18.6 6,22 Q5.2,18.6 2,17.8 Q5.2,17 6,13.5Z" fill="url(#sp)"/>
 <path d="M6,2.5 Q6.5,4.6 8.5,5 Q6.5,5.4 6,7.5 Q5.5,5.4 3.5,5 Q5.5,4.6 6,2.5Z" fill="url(#sp)"/>
</svg>

</body></html>
